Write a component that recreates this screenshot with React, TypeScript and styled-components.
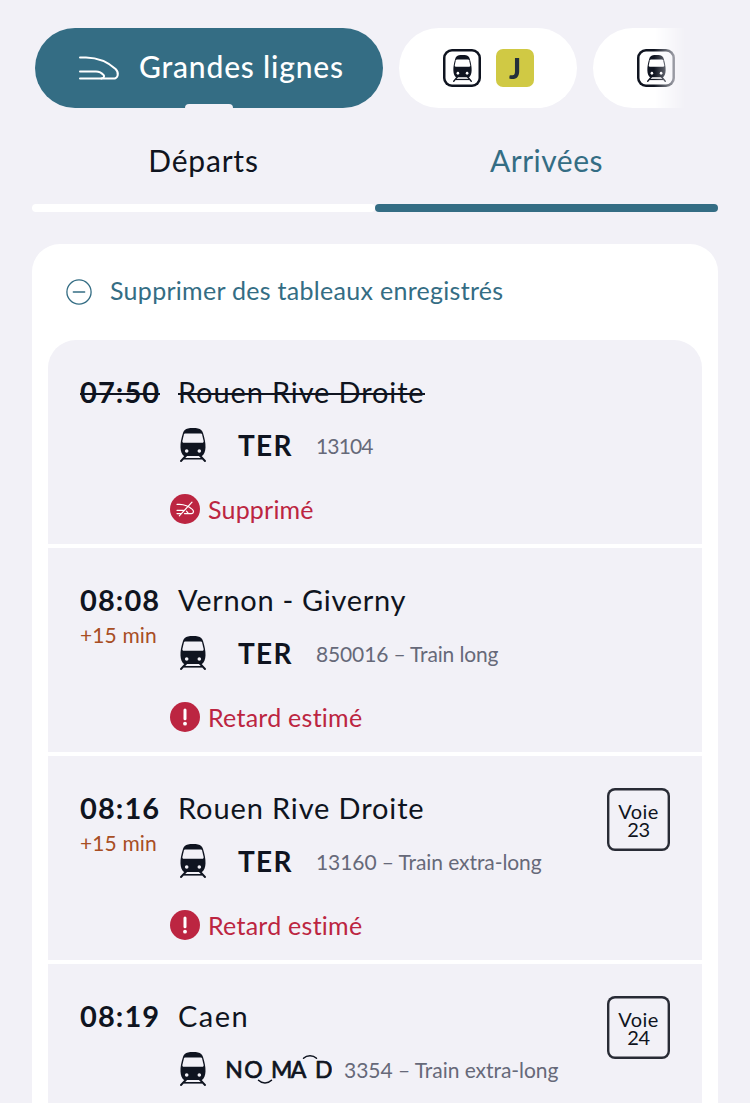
import React from "react";
import styled, { createGlobalStyle, css } from "styled-components";

const color = {
  page: "#f2f1f7",
  ink: "#0f1420",
  teal: "#346d84",
  red: "#bc2541",
  orange: "#a84e24",
  grey: "#666979",
  line: "#d0c944",
};

const GlobalStyle = createGlobalStyle`
  * { box-sizing: border-box; }
  html, body { margin: 0; background: ${color.page}; }
  body {
    font-family: Lato, "Open Sans", sans-serif;
    color: ${color.ink};
    overflow: hidden;
  }
`;

const Page = styled.main`
  width: 750px;
  height: 1103px;
  overflow: hidden;
  padding: 28px 32px 0;
  background: ${color.page};
`;

const PillScroller = styled.nav`
  display: flex;
  gap: 16px;
  width: 654px;
  height: 80px;
  padding-left: 3px;
  overflow: hidden;
  mask-image: linear-gradient(to right, #000 622px, transparent 654px);
`;

const Pill = styled.button<{ $active?: boolean; $width: number }>`
  position: relative;
  flex: none;
  display: flex;
  align-items: center;
  gap: 15px;
  width: ${(p) => p.$width}px;
  height: 80px;
  padding: 0 0 0 44px;
  border: 0;
  border-radius: 40px;
  background: #fff;
  color: ${color.ink};
  font: inherit;
  ${(p) =>
    p.$active &&
    css`
      gap: 18px;
      padding-left: 43px;
      background: ${color.teal};
      color: #fff;
      &::after {
        content: "";
        position: absolute;
        left: 150px;
        bottom: 0;
        width: 48px;
        height: 4px;
        border-radius: 4px 4px 0 0;
        background: ${color.page};
      }
    `}
`;

const PillLabel = styled.span`
  padding-bottom: 5px;
  font-size: 30px;
  font-weight: 500;
  line-height: 40px;
  letter-spacing: 0.82px;
  white-space: nowrap;
`;

const ModeFrame = styled.span`
  display: flex;
  align-items: center;
  justify-content: center;
  width: 38px;
  height: 38px;
  border-radius: 9px;
  box-shadow: inset 0 0 0 2.5px ${color.ink};
`;

const LineBadge = styled.span`
  display: flex;
  align-items: center;
  justify-content: center;
  width: 38px;
  height: 38px;
  border-radius: 7px;
  background: ${color.line};
  color: #25303b;
  font-size: 28px;
  font-weight: 900;
  line-height: 38px;
`;

const Tabs = styled.div`
  display: grid;
  grid-template-columns: 1fr 1fr;
  padding-top: 32px;
`;

const Tab = styled.button<{ $active?: boolean; $tracking: number }>`
  display: flex;
  flex-direction: column;
  gap: 24px;
  padding: 0;
  border: 0;
  background: none;
  color: ${(p) => (p.$active ? color.teal : color.ink)};
  font: inherit;
  font-size: 30px;
  line-height: 40px;
  letter-spacing: ${(p) => p.$tracking}px;
  text-align: center;
  &::after {
    content: "";
    height: 8px;
    width: 100%;
    border-radius: 4px;
    background: ${(p) => (p.$active ? color.teal : "#fff")};
  }
`;

const TabText = styled.span`
  width: 100%;
`;

const Card = styled.section`
  margin-top: 32px;
  padding: 0 16px;
  border-radius: 28px 28px 0 0;
  background: #fff;
`;

const SavedAction = styled.button`
  display: flex;
  align-items: center;
  gap: 18px;
  width: 100%;
  height: 96px;
  padding: 0 18px;
  border: 0;
  background: none;
  color: ${color.teal};
  font: inherit;
  font-size: 25px;
  line-height: 32px;
  letter-spacing: 0.29px;
`;

const ActionText = styled.span`
  padding-bottom: 5px;
`;

const Board = styled.ul`
  display: flex;
  flex-direction: column;
  gap: 4px;
  margin: 0;
  padding: 0;
  list-style: none;
  border-radius: 28px 28px 0 0;
  overflow: hidden;
`;

const TrainRow = styled.li`
  display: grid;
  grid-template-columns: 90px 1fr auto;
  height: 204px;
  padding: 32px 32px 0;
  background: ${color.page};
`;

const TimeColumn = styled.div`
  display: flex;
  flex-direction: column;
`;

const struck = css`
  position: relative;
  &::after {
    content: "";
    position: absolute;
    left: 0;
    right: 0;
    top: 21px;
    height: 1.5px;
    background: ${color.ink};
  }
`;

const Time = styled.time<{ $struck?: boolean }>`
  align-self: flex-start;
  font-size: 29px;
  font-weight: 700;
  line-height: 40px;
  letter-spacing: 1.1px;
  ${(p) => p.$struck && struck}
`;

const Delay = styled.span`
  color: ${color.orange};
  font-size: 21px;
  line-height: 30px;
  letter-spacing: 0.13px;
  white-space: nowrap;
`;

const Details = styled.div`
  display: flex;
  flex-direction: column;
  align-items: flex-start;
`;

const Destination = styled.span<{ $struck?: boolean; $tracking: number }>`
  margin-left: 8px;
  font-size: 29px;
  line-height: 40px;
  letter-spacing: ${(p) => p.$tracking}px;
  white-space: nowrap;
  ${(p) => p.$struck && struck}
`;

const Service = styled.div`
  display: flex;
  align-items: center;
  height: 40px;
  margin: 13px 0 24px;
  padding-left: 10px;
`;

const Brand = styled.span`
  display: flex;
  align-items: center;
  margin: 0 12px 0 20px;
`;

const TerName = styled.span`
  width: 78px;
  padding-left: 12px;
  font-size: 28px;
  font-weight: 700;
  line-height: 40px;
  letter-spacing: 1.3px;
`;

const TrainInfo = styled.span<{ $tracking: number }>`
  padding-top: 1px;
  color: ${color.grey};
  font-size: 21px;
  line-height: 40px;
  letter-spacing: ${(p) => p.$tracking}px;
  white-space: nowrap;
`;

const Status = styled.div<{ $tracking: number }>`
  display: flex;
  align-items: center;
  gap: 8px;
  height: 40px;
  color: ${color.red};
  font-size: 25px;
  line-height: 40px;
  letter-spacing: ${(p) => p.$tracking}px;
  white-space: nowrap;
`;

const Platform = styled.div`
  display: grid;
  grid-template-rows: 18px 18px;
  width: 63px;
  height: 63px;
  padding-top: 14px;
  border-radius: 8px;
  box-shadow: inset 0 0 0 2.4px #282b35;
  font-size: 20px;
  line-height: 18px;
  text-align: center;
`;

const Track = styled.span<{ $tracking: number }>`
  letter-spacing: ${(p) => p.$tracking}px;
`;

function TrainIcon({ width, height, hole }: { width: number; height: number; hole: string }) {
  return (
    <svg width={width} height={height} viewBox="0 0 26 34" preserveAspectRatio="none" fill="none">
      <path
        d="M8 0.4C10.500 0 15.500 0 18 0.400C20.600 0.800 22.200 2.400 23 5C24.600 10 25.700 15 25.500 19.500C25.300 23.500 24.300 26.200 22 28H4C1.700 26.200 0.700 23.500 0.500 19.500C0.300 15 1.400 10 3 5C3.800 2.400 5.400 0.800 8 0.400Z"
        fill={color.ink}
      />
      <path d="M5.500 5.600H20.500C21.400 5.600 21.900 5.900 22.100 6.600L23.600 12.900C23.800 14 23.300 14.700 22.300 14.700H3.700C2.700 14.700 2.200 14 2.400 12.900L3.900 6.600C4.100 5.900 4.600 5.600 5.500 5.600Z" fill={hole} />
      <circle cx="6.700" cy="23" r="1.800" fill={hole} />
      <circle cx="19.300" cy="23" r="1.800" fill={hole} />
      <path d="M6.200 27.500L1 33M19.800 27.500L25 33" stroke={color.ink} strokeWidth="1.900" strokeLinecap="round" />
      <path d="M4 30.800H22" stroke={color.ink} strokeWidth="1.600" />
    </svg>
  );
}

function HighSpeedIcon() {
  return (
    <svg width="43" height="26" viewBox="0 0 43 26" fill="none" stroke="#fff" strokeWidth="2" strokeLinecap="round" strokeLinejoin="round">
      <path d="M2 2.400H8C20 2.700 31 7.800 37.600 14C41.400 17.800 40.200 23.600 35.200 23.600H2" />
      <path d="M2 16.500H18C22.200 16.500 24 18.200 25.700 20.200C26.800 21.600 25.500 23.200 23.500 23.500" />
    </svg>
  );
}

function MinusCircleIcon() {
  return (
    <svg width="26" height="26" viewBox="0 0 26 26" fill="none" stroke={color.teal} strokeWidth="1.300" strokeLinecap="round">
      <circle cx="13" cy="13" r="12.100" />
      <path d="M7.300 13H18.700" />
    </svg>
  );
}

function CancelledIcon() {
  return (
    <svg width="30" height="30" viewBox="0 0 30 30" fill="none" stroke="#fff" strokeWidth="1.200" strokeLinecap="round" strokeLinejoin="round">
      <circle cx="15" cy="15" r="15" fill={color.red} stroke="none" />
      <path d="M7 10.300H9.500C14.500 10.400 19.300 12.600 22.300 15.400C24.300 17.300 23.600 19.600 21.300 19.600H14.500" />
      <path d="M7 16.300H13.500M7 19.600H10.500M16.500 17.200L18.300 19.400" />
      <path d="M9.300 21.800L22 8.200" />
    </svg>
  );
}

function AlertIcon() {
  return (
    <svg width="30" height="30" viewBox="0 0 30 30">
      <circle cx="15" cy="15" r="15" fill={color.red} />
      <path d="M15 8V16.800" stroke="#fff" strokeWidth="3" strokeLinecap="round" />
      <circle cx="15" cy="21.700" r="1.900" fill="#fff" />
    </svg>
  );
}

const NomadText = styled.text`
  font-family: Lato, sans-serif;
  font-size: 23px;
  font-weight: 400;
  stroke-width: 0.7px;
  stroke-linejoin: round;
`;

function NomadLogo() {
  return (
    <svg width="106" height="34" viewBox="0 0 106 34" fill="none">
      <NomadText x="-0.800 18.300 45 64.700 89" y="25.800" fill={color.ink} stroke={color.ink}>
        NOMAD
      </NomadText>
      <path d="M32.500 28.200C36 31.800 42 31.800 45.500 28.200M77.500 6.300C81 2.800 87 2.800 90.500 6.300" stroke={color.ink} strokeWidth="1.500" strokeLinecap="round" />
    </svg>
  );
}

function FramedTrain() {
  return (
    <ModeFrame>
      <TrainIcon width={19} height={27} hole="#fff" />
    </ModeFrame>
  );
}

type Train = {
  time: string;
  delay?: string;
  destination: string;
  destinationTracking: number;
  brand: "ter" | "nomad";
  info: string;
  infoTracking: number;
  status: "cancelled" | "late";
  platform?: string;
};

const trains: Train[] = [
  { time: "07:50", destination: "Rouen Rive Droite", destinationTracking: 0.87, brand: "ter", info: "13104", infoTracking: -0.85, status: "cancelled" },
  { time: "08:08", delay: "+15 min", destination: "Vernon - Giverny", destinationTracking: 0.7, brand: "ter", info: "850016 – Train long", infoTracking: -0.14, status: "late" },
  { time: "08:16", delay: "+15 min", destination: "Rouen Rive Droite", destinationTracking: 0.87, brand: "ter", info: "13160 – Train extra-long", infoTracking: -0.08, status: "late", platform: "23" },
  { time: "08:19", destination: "Caen", destinationTracking: 1.5, brand: "nomad", info: "3354 – Train extra-long", infoTracking: -0.04, status: "late", platform: "24" },
];

export default function App() {
  return (
    <Page>
      <GlobalStyle />
      <PillScroller>
        <Pill $active $width={348}>
          <HighSpeedIcon />
          <PillLabel>Grandes lignes</PillLabel>
        </Pill>
        <Pill $width={178}>
          <FramedTrain />
          <LineBadge>J</LineBadge>
        </Pill>
        <Pill $width={178}>
          <FramedTrain />
        </Pill>
      </PillScroller>

      <Tabs>
        <Tab $tracking={0.8}>
          <TabText>Départs</TabText>
        </Tab>
        <Tab $active $tracking={0.5}>
          <TabText>Arrivées</TabText>
        </Tab>
      </Tabs>

      <Card>
        <SavedAction>
          <MinusCircleIcon />
          <ActionText>Supprimer des tableaux enregistrés</ActionText>
        </SavedAction>
        <Board>
          {trains.map((train) => {
            const cancelled = train.status === "cancelled";
            return (
              <TrainRow key={train.time}>
                <TimeColumn>
                  <Time $struck={cancelled}>{train.time}</Time>
                  {train.delay && <Delay>{train.delay}</Delay>}
                </TimeColumn>
                <Details>
                  <Destination $struck={cancelled} $tracking={train.destinationTracking}>
                    {train.destination}
                  </Destination>
                  <Service>
                    <TrainIcon width={26} height={34} hole={color.page} />
                    <Brand>{train.brand === "ter" ? <TerName>TER</TerName> : <NomadLogo />}</Brand>
                    <TrainInfo $tracking={train.infoTracking}>{train.info}</TrainInfo>
                  </Service>
                  {train.brand === "ter" && (
                    <Status $tracking={cancelled ? 0.2 : 0.25}>
                      {cancelled ? <CancelledIcon /> : <AlertIcon />}
                      {cancelled ? "Supprimé" : "Retard estimé"}
                    </Status>
                  )}
                </Details>
                {train.platform && (
                  <Platform>
                    <Track $tracking={0.5}>Voie</Track>
                    <Track $tracking={-0.4}>{train.platform}</Track>
                  </Platform>
                )}
              </TrainRow>
            );
          })}
        </Board>
      </Card>
    </Page>
  );
}
